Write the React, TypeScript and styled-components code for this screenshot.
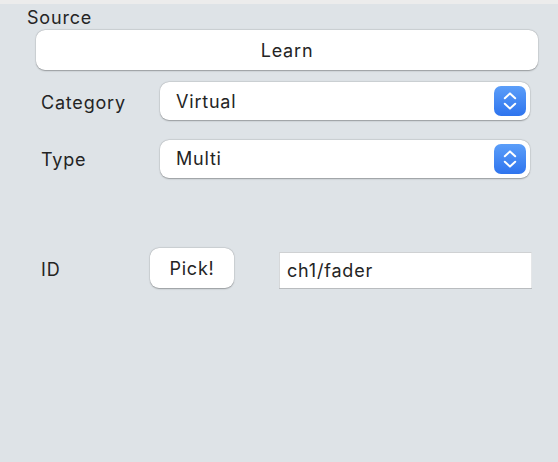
import React from "react";
import styled, { createGlobalStyle } from "styled-components";

const Global = createGlobalStyle`
  html, body { margin: 0; padding: 0; background: #dee3e7; }
  body { font-family: Inter, "Noto Sans", sans-serif; color: #242424; }
`;

const Page = styled.div`
  width: 558px;
  height: 462px;
  display: flex;
  flex-direction: column;
  background: #dee3e7;
  overflow: hidden;
  letter-spacing: 0.8px;
`;

const TopStrip = styled.div`
  height: 4px;
  background: #ececec;
  flex: none;
`;

const Panel = styled.div`
  display: flex;
  flex-direction: column;
  padding: 0 20px 0 27px;
`;

const Legend = styled.div`
  font-size: 18px;
  line-height: 20px;
  height: 26px;
  padding-top: 4px;
  box-sizing: border-box;
`;

const LearnButton = styled.button`
  margin: 0 0 0 9px;
  height: 40px;
  border: none;
  border-radius: 9px;
  background: #fff;
  box-shadow: 0 0.5px 1.5px rgba(0, 0, 0, 0.3), 0 0 0 0.5px rgba(0, 0, 0, 0.06);
  font-family: inherit;
  font-size: 18px;
  letter-spacing: inherit;
  color: #242424;
  padding: 0;
`;

const Row = styled.div<{ $top: number; $h: number }>`
  display: flex;
  align-items: center;
  margin-top: ${(p) => p.$top}px;
  height: ${(p) => p.$h}px;
  padding-left: 14px;
`;

const Label = styled.div<{ $w: number }>`
  width: ${(p) => p.$w}px;
  font-size: 18px;
  flex: none;
  padding-top: 2px;
`;

const Select = styled.div`
  flex: none;
  width: 370px;
  height: 38px;
  box-sizing: border-box;
  background: #fff;
  border-radius: 9px;
  box-shadow: 0 0.5px 1.5px rgba(0, 0, 0, 0.3), 0 0 0 0.5px rgba(0, 0, 0, 0.06);
  display: flex;
  align-items: center;
  justify-content: space-between;
  padding: 0 4px 0 16px;
  font-size: 18px;
`;

const Stepper = styled.div`
  width: 32px;
  height: 30px;
  border-radius: 7px;
  background: linear-gradient(#5b9ef9, #2e74ee);
  display: flex;
  align-items: center;
  justify-content: center;
`;

const PickButton = styled.button`
  flex: none;
  width: 84px;
  height: 40px;
  border: none;
  border-radius: 9px;
  background: #fff;
  box-shadow: 0 0.5px 1.5px rgba(0, 0, 0, 0.3), 0 0 0 0.5px rgba(0, 0, 0, 0.06);
  font-family: inherit;
  font-size: 18px;
  letter-spacing: inherit;
  color: #242424;
  padding: 0;
  margin-right: 45px;
`;

const Field = styled.div`
  flex: none;
  width: 253px;
  height: 36px;
  box-sizing: border-box;
  background: #fff;
  border-top: 1px solid #cfd1d3;
  border-left: 1px solid #d6d8da;
  border-right: 1px solid #e4e6e8;
  box-shadow: 0 1px 0 #b9bcbf;
  display: flex;
  align-items: center;
  padding-left: 7px;
  font-size: 18px;
  margin-top: 4px;
`;

const Chevrons = () => (
  <svg width="16" height="22" viewBox="0 0 16 22" fill="none">
    <path d="M2.8 8.2 L8 3.4 L13.2 8.2" stroke="#fff" strokeWidth="2" strokeLinecap="round" strokeLinejoin="round" />
    <path d="M2.8 13.8 L8 18.6 L13.2 13.8" stroke="#fff" strokeWidth="2" strokeLinecap="round" strokeLinejoin="round" />
  </svg>
);

export default function App() {
  return (
    <Page>
      <Global />
      <TopStrip />
      <Panel>
        <Legend>Source</Legend>
        <LearnButton>Learn</LearnButton>
        <Row $top={12} $h={38}>
          <Label $w={119}>Category</Label>
          <Select>
            Virtual
            <Stepper>
              <Chevrons />
            </Stepper>
          </Select>
        </Row>
        <Row $top={19} $h={39}>
          <Label $w={119}>Type</Label>
          <Select>
            Multi
            <Stepper>
              <Chevrons />
            </Stepper>
          </Select>
        </Row>
        <Row $top={70} $h={40}>
          <Label $w={109}>ID</Label>
          <PickButton>Pick!</PickButton>
          <Field>ch1/fader</Field>
        </Row>
      </Panel>
    </Page>
  );
}
